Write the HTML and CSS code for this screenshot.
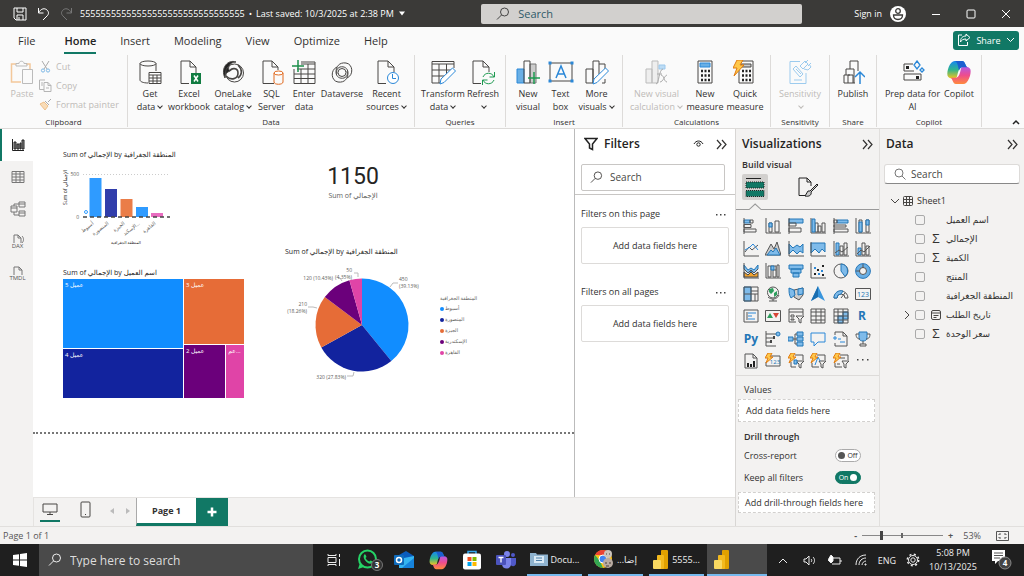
FILE: index.html
```html
<!DOCTYPE html>
<html lang="en">
<head>
<meta charset="utf-8">
<title>Power BI Desktop</title>
<link rel="stylesheet" href="styles.css">
</head>
<body>
<header class="titlebar">
  <div class="title-left">
    <button class="plain" aria-label="Save"><svg width="14" height="14" viewBox="0 0 14 14" class="line"><path d="M1 1h12v12H3l-2-2zM4 1v4h6V1M4 13V8h6v5M6 10v3"/></svg></button>
    <button class="plain" aria-label="Undo"><svg width="13" height="14" viewBox="0 0 13 14" class="line"><path d="M1.500 1v5h5M1.500 6C4 1 8 1 10 3s2 4 0 6l-4 4"/></svg></button>
    <button class="plain dim" aria-label="Redo"><svg width="13" height="14" viewBox="0 0 13 14" class="line"><path d="M11.500 1v5h-5M11.500 6C9 1 5 1 3 3s-2 4 0 6l4 4"/></svg></button>
    <button class="plain filename"><span>55555555555555555555555555555555</span><span>•</span><span>Last saved: 10/3/2025 at 2:38 PM</span><svg width="8" height="5" viewBox="0 0 8 5"><path d="M1 .5h6L4 4.500z" fill="#fff"/></svg></button>
  </div>
  <label class="title-search"><svg width="14" height="14" viewBox="0 0 14 14" class="line"><circle cx="8.500" cy="5" r="4"/><path d="M5.500 8L1 12.500"/></svg><input type="text" placeholder="Search" aria-label="Search"></label>
  <div class="title-right">
    <button class="plain signin">Sign in <svg width="16" height="16" viewBox="0 0 16 16"><circle cx="8" cy="8" r="8" fill="#fff"/><g fill="none" stroke="#3b3a38" stroke-width="1.300"><circle cx="8" cy="5" r="2.300"/><path d="M3.500 9h9c0 6-9 6-9 0z"/></g></svg></button>
    <button class="plain" aria-label="Minimize"><svg width="10" height="10" viewBox="0 0 10 10" class="line"><path d="M1 5.500h8"/></svg></button>
    <button class="plain" aria-label="Maximize"><svg width="10" height="10" viewBox="0 0 10 10" class="line"><rect x="1" y="1" width="8" height="8" rx="1"/></svg></button>
    <button class="plain" aria-label="Close"><svg width="10" height="10" viewBox="0 0 10 10" class="line"><path d="M1 1l8 8M9 1L1 9"/></svg></button>
  </div>
</header>

<nav class="tabs">
  <a href="#">File</a><a href="#" class="on">Home</a><a href="#">Insert</a><a href="#">Modeling</a><a href="#">View</a><a href="#">Optimize</a><a href="#">Help</a>
  <button class="share"><svg width="14" height="14" viewBox="0 0 14 14" class="line"><path d="M5 2H1.500v10.500h9V9M9 1l4 3.500-4 3.500V6C6 6 4.500 7 3.500 9c0-4 2-6 5.500-6z"/></svg>Share<svg width="9" height="6" viewBox="0 0 9 6" class="line"><path d="M1 1l3.500 3.500L8 1"/></svg></button>
</nav>

<section class="ribbon">
  <div class="group">
    <div class="tools clip">
      <button class="tool off"><svg width="24" height="25" viewBox="0 0 24 25" class="ic"><path d="M6 4H1.500v18H11M16 4h4v5" stroke="#f3c89b" stroke-width="1.500"/><path d="M6 6V3.500h3c0-3 5-3 5 0h3V6z" stroke="#bbb"/><path d="M12.500 9.500h10v14h-10z" stroke="#bbb"/></svg>Paste</button>
      <div class="cliplist">
        <button><svg width="13" height="13" viewBox="0 0 13 13" class="ic"><path d="M3 1l5 8M10 1L5 9" stroke="#aaa"/><circle cx="4" cy="10.500" r="1.600" stroke="#7db8e6"/><circle cx="9" cy="10.500" r="1.600" stroke="#7db8e6"/></svg>Cut</button>
        <button><svg width="13" height="13" viewBox="0 0 13 13" class="ic" ><path d="M5 10.500H.5V1H6M5 3.500h4l3 3v6H5zM9 3.500v3h3M2 4h2M2 6h2M7 9h3" stroke="#b5b5b5"/></svg>Copy</button>
        <button><svg width="13" height="13" viewBox="0 0 13 13" class="ic"><path d="M12 1L9 4M6 3l4 4M5 4l4 4" stroke="#aaa"/><path d="M5 4L1 6l5 6 3-4z" fill="#f8dcb8" stroke="#efc08a"/></svg>Format painter</button>
      </div>
    </div><span class="gname">Clipboard</span>
  </div>
  <div class="group">
    <div class="tools data">
      <button class="tool"><svg width="24" height="25" viewBox="0 0 24 25" class="ic"><ellipse cx="10" cy="3.500" rx="8" ry="2.500"/><path d="M2 3.500V20c0 1.500 3 3 8 3M18 3.500V11"/><path d="M11 12.500h12v11H11zM11 15h12M11 18h12M11 21h12M15 15v8.500M19 15v8.500" fill="#fff"/></svg>Get<br>data<span class="dd"></span></button>
      <button class="tool"><svg width="24" height="25" viewBox="0 0 24 25" class="ic"><path d="M12 23.500H4V1h9l6 6v6M13 1v6h6"/><path d="M14 13h10v11H14z" fill="#107c41" stroke="none"/><path d="M17 15.500l4 6M21 15.500l-4 6" stroke="#fff" stroke-width="1.500"/></svg>Excel<br>workbook</button>
      <button class="tool"><svg width="24" height="25" viewBox="0 0 24 25" class="ic"><path d="M4 18C-1 8 7-1 15 2c-7 0-9 7-6 9-3 1-5 3-5 7z" fill="#222"/><circle cx="13.500" cy="13" r="9"/><path d="M5 16c5 5 12 3 12-3s-7-5-8-2M17 5c5 5 4 10 0 13" stroke-width="1.600"/></svg>OneLake<br>catalog<span class="dd"></span></button>
      <button class="tool"><svg width="24" height="25" viewBox="0 0 24 25" class="ic"><path d="M14 23.500H3V1h9l6 6v3M12 1v6h6"/><g stroke="#e06a20"><ellipse cx="18.500" cy="13" rx="4.500" ry="2" fill="#fff"/><path d="M14 13v9c0 3 9 3 9 0v-9"/></g></svg>SQL<br>Server</button>
      <button class="tool"><svg width="24" height="25" viewBox="0 0 24 25" class="ic"><path d="M9 2h14v21.500H2V9M9 4h14M5 9h18M2 14h21M2 18.500h21M9 9v14.500M16 4v19.500"/><path d="M6 0v12M0 6h12" stroke="#1d8f4b" stroke-width="1.500"/></svg>Enter<br>data</button>
      <button class="tool"><svg width="24" height="25" viewBox="0 0 24 25" class="ic"><circle cx="12" cy="12.500" r="4"/><path d="M17 18c7-3 6-14-1-15C9 2 6 7 6 12s4 7 8 6c3-1 4-4 3-7M7 7C0 10 1 21 8 22c7 1 10-4 10-9s-4-7-8-6c-3 1-4 4-3 7"/></svg>Dataverse</button>
      <button class="tool"><svg width="24" height="25" viewBox="0 0 24 25" class="ic"><path d="M11 23.500H3V1h10l6 6v5M13 1v6h6"/><circle cx="18" cy="18" r="5.500" stroke="#2b88d8" fill="#fff"/><path d="M17.500 14v4.500h3.500" stroke="#2b88d8"/></svg>Recent<br>sources<span class="dd"></span></button>
    </div><span class="gname">Data</span>
  </div>
  <div class="group">
    <div class="tools queries">
      <button class="tool"><svg width="25" height="25" viewBox="0 0 25 25" class="ic"><path d="M9 23H1V1.500h22V8M1 4h22M1 10h20M1 16h13M8 4v19M15.500 4v11"/><path d="M9 24l1-5L21.500 8l3 3L13 22.500z" stroke="#2b88d8" fill="#fff"/></svg>Transform<br>data<span class="dd"></span></button>
      <button class="tool"><svg width="24" height="25" viewBox="0 0 24 25" class="ic"><path d="M10 23.500H2V1h10l6 6v5M12 1v6h6"/><path d="M12 17c2-5 9-5 11 0M23.500 12v5h-5M23 20c-2 5-9 5-11 0M11.500 25v-5h5" stroke="#1d9a50"/></svg>Refresh<br><span class="dd"></span></button>
    </div><span class="gname">Queries</span>
  </div>
  <div class="group w-insert">
    <div class="tools insert">
      <button class="tool"><svg width="24" height="25" viewBox="0 0 24 25" class="ic"><path d="M1 9h7v14H1z" fill="#69afe5" stroke="#2b88d8"/><path d="M14 4h6v19h-6z" fill="#ccc" stroke="#777"/><path d="M8 1h6v22H8z"/><path d="M18 12v12M12 18h12" stroke="#1d9a50" stroke-width="1.500"/></svg>New<br>visual</button>
      <button class="tool"><svg width="26" height="25" viewBox="0 0 26 25" class="ic"><path d="M2 3h22v18H2z"/><path d="M8 18l5-12 5 12M10 14h6" stroke="#2b88d8" stroke-width="1.500"/><path d="M.5 1.500h3v3h-3zM22.500 1.500h3v3h-3zM.5 19.500h3v3h-3zM22.500 19.500h3v3h-3z" fill="#2b88d8" stroke="none"/></svg>Text<br>box</button>
      <button class="tool"><svg width="24" height="25" viewBox="0 0 24 25" class="ic"><path d="M1 9h7v14H1zM8 23V1h6v13M14 4h6v5M17 23h3v-4"/><path d="M8 24l1-5L20.500 8l3 3L12 22.500z" stroke="#2b88d8" fill="#fff"/></svg>More<br>visuals<span class="dd"></span></button>
    </div><span class="gname">Insert</span>
  </div>
  <div class="group w-calc">
    <div class="tools calc">
      <button class="tool off"><svg width="24" height="25" viewBox="0 0 24 25" class="ic"><path d="M1 9h6v14H1zM7 1h6v22H7z" fill="#eee" stroke="#bbb"/><path d="M14 5h6v4h-6z" fill="#bcdcf5" stroke="#9cc8ec"/><path d="M11 24c3 0 3-15 7-15M12 14h5M16 15c3 0 3 7 6 7M22 15c-2 0-4 7-7 7" stroke="#aaa"/></svg>New visual<br>calculation<span class="dd"></span></button>
      <button class="tool"><svg width="24" height="25" viewBox="0 0 24 25" class="ic"><path d="M5 1h14v22H5z"/><path d="M7 3h10v4H7z" fill="#69afe5" stroke="#2b88d8"/><path d="M8 11h9M8 15.500h9M8 20h9" stroke-width="2.500" stroke-dasharray="2 1.500" stroke="#222"/></svg>New<br>measure</button>
      <button class="tool"><svg width="24" height="25" viewBox="0 0 24 25" class="ic"><path d="M6 1h14v22H6z"/><path d="M8 4h10v3H8z" fill="#ccc"/><path d="M9 11h9M9 15.500h9M9 20h9" stroke-width="2.500" stroke-dasharray="2 1.500" stroke="#222"/><path d="M4 0h6L7 5h4L1 16l3-8H0z" fill="#ffc84a" stroke="#e07b10"/></svg>Quick<br>measure</button>
    </div><span class="gname">Calculations</span>
  </div>
  <div class="group w-sens">
    <div class="tools one">
      <button class="tool off"><svg width="24" height="25" viewBox="0 0 24 25" class="ic"><g stroke="#9ccbee"><path d="M12 1.500H2v22h16V13M5 9l3-3 7 8-3 3zM8 9l5 5M6 20h8M12 6l5-5 3 3-5 5zM17 3l3-3M20 6l3-3M16 9l4 1 3-3-2-3"/></g></svg>Sensitivity<br><span class="dd"></span></button>
    </div><span class="gname">Sensitivity</span>
  </div>
  <div class="group w-share">
    <div class="tools one">
      <button class="tool"><svg width="24" height="25" viewBox="0 0 24 25" class="ic"><path d="M14 23H3v-8h6M7 23v-8h5v8M5 15V9h8M9 9V1h8v10M13 9v14"/><path d="M19 24V12M14 17l5-5 5 5" stroke="#2b88d8" stroke-width="1.500"/></svg>Publish</button>
    </div><span class="gname">Share</span>
  </div>
  <div class="group w-copilot">
    <div class="tools copilot">
      <button class="tool"><svg width="24" height="25" viewBox="0 0 24 25" class="ic"><path d="M12 4H3v7h10M3 14h17v6H3z"/><path d="M5 6h3v3H5zM15 16h3v3h-3z" fill="#222" stroke="none"/><path d="M16 1l3 4-3 4-3-4zM21 8l2 2-2 2-2-2z" stroke="#2b88d8" stroke-width="1.300"/></svg>Prep data for<br>AI</button>
      <button class="tool"><svg width="26" height="25" viewBox="0 0 24 24"><use href="#copilot"/></svg>Copilot</button>
    </div><span class="gname">Copilot</span>
  </div>
  <button class="plain collapse" aria-label="Collapse ribbon"><svg width="8" height="6" viewBox="0 0 8 6" fill="none" stroke="#222" stroke-width="1.500"><path d="M1 5l3-3 3 3"/></svg></button>
</section>

<main class="work">
  <nav class="rail">
    <a href="#" class="on" aria-label="Report view"><svg width="14" height="14" viewBox="0 0 14 14" class="ic"><path d="M1.500 1v11.500H13" stroke="#222"/><path d="M3 4h2v7H3zM6 6h2v5H6zM9 5h1v6H9zM11 2h2v9h-2z" fill="#888" stroke="#222"/></svg></a>
    <a href="#" aria-label="Table view"><svg width="14" height="14" viewBox="0 0 14 14" class="ic gray"><path d="M1 1.500h12v11H1zM1 4h12M1 7h12M1 10h12M5 1.500v11M9 1.500v11"/></svg></a>
    <a href="#" aria-label="Model view"><svg width="16" height="16" viewBox="0 0 16 16" class="ic gray"><path d="M1 5h6v6H1zM9 1h6v5H9zM9 10h6v5H9zM1 7h6M9 3h6M9 12h6M4 5V3h5M4 11v3h5"/></svg></a>
    <a href="#" aria-label="DAX query view"><svg width="14" height="10" viewBox="0 0 14 10" class="ic gray"><path d="M3 9V1h4l3 3v5M7 1v3h3M11 2c2 2 2 5 0 7"/></svg><span>DAX</span></a>
    <a href="#" aria-label="TMDL view"><svg width="14" height="10" viewBox="0 0 14 10" class="ic gray"><path d="M3 9V1h5l3 3v5M8 1v3h3"/></svg><span>TMDL</span></a>
  </nav>

  <div class="center">
    <div class="center-top">
      <div class="canvas">
        <div class="visuals">
          <div class="col">
            <h3>Sum of الإجمالي by المنطقة الجغرافية</h3>
            <svg class="bars" width="110" height="84" viewBox="0 0 110 84">
              <path d="M20 8.500h87" stroke="#ccc" stroke-dasharray="1 2"/>
              <text x="16" y="10" text-anchor="end">500</text><text x="16" y="53" text-anchor="end">0</text>
              <text class="dark" transform="translate(4 39) rotate(-90)">Sum of الإجمالي</text>
              <path d="M26.500 12h12v39h-12z" fill="#2f9bff"/><path d="M42 23h12v28H42z" fill="#303dab"/><path d="M57.500 33h12v18h-12z" fill="#ea7d48"/><path d="M73 41h12v10H73z" fill="#2f9bff"/><path d="M88 47h12v4H88z" fill="#e96cc0"/>
              <path d="M20 51h87" stroke="#444" stroke-width="1.500" stroke-dasharray="4 3"/>
              <circle cx="23" cy="46" r="1.500" fill="none" stroke="#2f9bff"/>
              <g text-anchor="end"><text transform="translate(31 58) rotate(-38)">أسيوط</text><text transform="translate(46 58) rotate(-38)">المنصورة</text><text transform="translate(62 58) rotate(-38)">الجيزة</text><text transform="translate(77 58) rotate(-38)">الإسكند...</text><text transform="translate(93 58) rotate(-38)">القاهرة</text></g>
              <text class="dark small" x="63" y="78" text-anchor="middle">المنطقة الجغرافية</text>
            </svg>
            <h3 class="second">Sum of الإجمالي by اسم العميل</h3>
            <div class="treemap">
              <div class="tm-left"><span class="blue">عميل 5</span><span class="navy">عميل 4</span></div>
              <div class="tm-right"><span class="orange">عميل 3</span><div class="tm-pair"><span class="purple">عميل 2</span><span class="pink">عم...</span></div></div>
            </div>
          </div>
          <div class="col">
            <div class="card"><strong>1150</strong><span>Sum of الإجمالي</span></div>
            <h3>Sum of الإجمالي by المنطقة الجغرافية</h3>
            <div class="pierow">
              <svg width="155" height="128" viewBox="0 0 155 128">
                <g transform="translate(77 67)">
                  <path d="M0 0V-46.500A46.500 46.500 0 0 1 29.300 36.100z" fill="#118dff"/>
                  <path d="M0 0L29.300 36.100A46.500 46.500 0 0 1-40.700 22.500z" fill="#12239e"/>
                  <path d="M0 0L-40.700 22.500A46.500 46.500 0 0 1-37.200-27.900z" fill="#e66c37"/>
                  <path d="M0 0L-37.200-27.900A46.500 46.500 0 0 1-12.600-44.800z" fill="#6b007b"/>
                  <path d="M0 0L-12.600-44.800A46.500 46.500 0 0 1 0-46.500z" fill="#e044a7"/>
                </g>
                <path d="M105 29l3-4h5M73 19v-4h-4M32 50l-4-1h-5M69 114l-1 4h-6M57 23l-2-3h-2" fill="none" stroke="#bbb"/>
                <text x="114" y="23">450</text><text x="114" y="30">(39.13%)</text>
                <text x="67" y="14" text-anchor="end">50</text><text x="67" y="21" text-anchor="end">(4.35%)</text>
                <text x="48" y="22" text-anchor="end">120 (10.43%)</text>
                <text x="22" y="48" text-anchor="end">210</text><text x="22" y="55" text-anchor="end">(18.26%)</text>
                <text x="61" y="121" text-anchor="end">320 (27.83%)</text>
              </svg>
              <div class="legend"><b>المنطقة الجغرافية</b><ul><li class="c1">أسيوط</li><li class="c2">المنصورة</li><li class="c3">الجيزة</li><li class="c4">الإسكندرية</li><li class="c5">القاهرة</li></ul></div>
            </div>
          </div>
        </div>
      </div>

      <aside class="filters">
        <div class="filters-head">
          <div class="pane-title"><svg width="14" height="14" viewBox="0 0 14 14" fill="none" stroke="#222" stroke-width="1.500"><path d="M1 1.500h12L8.500 7v5.500l-3-1.500V7z"/></svg><h2>Filters</h2>
            <button class="plain" aria-label="Hide filters"><svg width="11" height="8" viewBox="0 0 11 8" fill="none" stroke="#222"><path d="M1 4c2-4 7-4 9 0"/><circle cx="5.500" cy="4.500" r="1.700"/></svg></button>
            <button class="plain" aria-label="Collapse filters"><svg width="11" height="11" viewBox="0 0 11 11" class="chev"><path d="M1 1l4 4.500L1 10M6 1l4 4.500L6 10"/></svg></button></div>
          <label class="fsearch"><svg width="13" height="13" viewBox="0 0 14 14" class="ic"><circle cx="8.500" cy="5" r="4"/><path d="M5.500 8L1 12.500"/></svg><input type="text" placeholder="Search" aria-label="Search filters"></label>
        </div>
        <div class="fsec"><span>Filters on this page</span><button class="plain" aria-label="More"><svg width="10" height="4" viewBox="0 0 10 4" fill="#444"><path d="M0 2h1.500v1.500H0zM4 2h1.500v1.500H4zM8 2h1.500v1.500H8z"/></svg></button></div>
        <div class="drop">Add data fields here</div>
        <div class="fsec"><span>Filters on all pages</span><button class="plain" aria-label="More"><svg width="10" height="4" viewBox="0 0 10 4" fill="#444"><path d="M0 2h1.500v1.500H0zM4 2h1.500v1.500H4zM8 2h1.500v1.500H8z"/></svg></button></div>
        <div class="drop">Add data fields here</div>
      </aside>
    </div>
    <div class="pagebar">
      <button class="view on" aria-label="Desktop layout"><svg width="16" height="13" viewBox="0 0 16 13" class="ic"><path d="M1 1h14v8H1zM8 9v2M5 11.500h6"/></svg></button>
      <button class="view" aria-label="Mobile layout"><svg width="11" height="17" viewBox="0 0 11 17" class="ic"><rect x="1" y="1" width="9" height="15" rx="1"/><path d="M5 13.500h1"/></svg></button>
      <button class="view arrow" aria-label="Previous page"><svg width="4" height="6" viewBox="0 0 4 6"><path d="M4 0v6L0 3z" fill="#bbb"/></svg></button>
      <button class="view arrow" aria-label="Next page"><svg width="4" height="6" viewBox="0 0 4 6"><path d="M0 0v6l4-3z" fill="#bbb"/></svg></button>
      <button class="page">Page 1</button><button class="add" aria-label="New page"><svg width="10" height="10" viewBox="0 0 10 10" stroke="#fff" stroke-width="2.500"><path d="M5 .5v9M.5 5h9"/></svg></button>
    </div>
  </div>

  <aside class="viz">
    <div class="pane-title"><h2>Visualizations</h2><button class="plain" aria-label="Collapse"><svg width="11" height="11" viewBox="0 0 11 11" class="chev"><path d="M1 1l4 4.500L1 10M6 1l4 4.500L6 10"/></svg></button></div>
    <h4>Build visual</h4>
    <div class="modes">
      <button class="mode on" aria-label="Build visual"><svg width="20" height="20" viewBox="0 0 20 20"><path d="M1 1.500h15" stroke="#222"/><path d="M1 5h18v6H1zM1 13.500h18v6H1z" fill="#117865" stroke="#222" stroke-dasharray="1 1"/></svg></button>
      <button class="mode" aria-label="Format visual"><svg width="20" height="20" viewBox="0 0 20 20" fill="none" stroke="#222"><path d="M8 18.500H1V1h8l4 4v4M9 1v4h4"/><path d="M19 7l-7 7-2 0-3 5c4 1 7-1 6-4l7-7z" fill="#ccc"/></svg></button>
    </div>
    <svg class="notch" width="142" height="7" viewBox="0 0 142 7" preserveAspectRatio="xMinYMin slice"><path d="M0 6.500h13L19 1l6 5.500h400" fill="none" stroke="#999"/></svg>
    <div class="gallery">
      <svg viewBox="0 0 16 16"><path class="b" d="M1 2h6v3H1z"/><path class="k" d="M7 2h3v3H7zM1 6.500h7v3H1zM1 11h12v3H1zM1 0v16"/></svg>
      <svg viewBox="0 0 16 16"><path class="k" d="M1 0v15h15M4 5h3v9H4zM10 3h4v11h-4z"/><path class="b" d="M4 5h3v4H4z"/></svg>
      <svg viewBox="0 0 16 16"><path class="b" d="M1 1h14v4H1z"/><path class="k" d="M1 5h7v3H1zM1 10h12v4H1zM1 0v16"/></svg>
      <svg viewBox="0 0 16 16"><path class="k" d="M1 0v15h15M5 5h3v9H5zM8 8h3v6H8zM12 5h3v9h-3z"/><path class="b" d="M2 1h3v13H2z"/></svg>
      <svg viewBox="0 0 16 16"><path class="b" d="M4 2h11v3H4z"/><path class="k" d="M1 2h3v3H1zM1 7h12v2H1zM1 11h14v3H1zM1 0v16"/></svg>
      <svg viewBox="0 0 16 16"><path class="k" d="M1 0v15h15M4 2h3v12H4zM11 2h3v12h-3z"/><path class="b" d="M4 4h3v10H4zM11 2h3v5h-3z"/></svg>

      <svg viewBox="0 0 16 16"><path class="k" d="M1 0v15h15M2 11l4-5 3 3 6-5"/><path class="l" d="M2 9l5-3 3-3 5 6"/></svg>
      <svg viewBox="0 0 16 16"><path class="k gf" d="M0 14L6 3l3 5 3-7 4 13z"/><path class="b" d="M2 14l4-5 2 2 3-4 4 7z"/></svg>
      <svg viewBox="0 0 16 16"><path class="b" d="M1 3l4 4 4-3 3 2 3-3v9l-3-2-3 3-4-4-4 4z"/><path class="k" d="M1 0v15h15"/></svg>
      <svg viewBox="0 0 16 16"><path class="b" d="M1 2h14v9l-3-3-3 4-4-4-4 4z"/><path class="k" d="M1 1v14h15"/></svg>
      <svg viewBox="0 0 16 16"><path class="b" d="M3 2h3v12H3z"/><path class="k" d="M1 0v15h15M7 5h3v9H7zM11 2h3v12h-3zM2 12l4-3 3 2 6-5"/></svg>
      <svg viewBox="0 0 16 16"><path class="b" d="M3 7h3v7H3z"/><path class="k" d="M1 0v15h15M7 2h3v12H7zM11 5h3v9h-3zM2 13l4-4 3 2 6-6"/></svg>

      <svg viewBox="0 0 16 16"><path class="b" d="M1 2l4 5 3-2 3 2 4-5v4l-4 4-3-2-3 2-4-4z"/><path d="M1 9l4 3 3-3 3 3 4-3v5H1z" fill="#f0a22e" stroke="#444"/><path class="k" d="M1 0v15h15M1 6l4 4 3-3 3 3 4-4"/></svg>
      <svg viewBox="0 0 16 16"><path class="k" d="M1 0v15h15M3 3h3v11H3zM8 7h3v7H8zM12 2h2v12h-2zM6 3h5v4"/><path class="b" d="M6 3h3v4H6z"/></svg>
      <svg viewBox="0 0 16 16"><path class="b" d="M1 2h14v4H1zM3 6h10v4H3zM5 10h6v4H5z"/></svg>
      <svg viewBox="0 0 16 16"><path class="k" d="M1 0v15h15"/><path fill="#222" d="M4 10h2v2H4zM7 6h2v2H7zM12 2h2v2h-2zM12 11h2v2h-2z"/><path fill="#2b88d8" d="M4 4h2v2H4zM8 10h2v2H8zM11 7h2v2h-2z"/></svg>
      <svg viewBox="0 0 16 16"><circle class="k" cx="8" cy="8" r="7"/><path class="b" d="M8 8V1a7 7 0 0 1 4 12.500z"/></svg>
      <svg viewBox="0 0 16 16"><circle cx="8" cy="8" r="5.500" fill="none" stroke="#69afe5" stroke-width="4"/><path class="k" d="M8 1v4M1 8h4"/><circle class="k" cx="8" cy="8" r="3.500"/><circle cx="8" cy="8" r="7.400" fill="none" stroke="#2b78b8"/></svg>

      <svg viewBox="0 0 16 16"><path class="b" d="M1 1h7v14H1z"/><path class="k" d="M1 1h14v14H1zM8 1v14M1 8h14M8 5h7M12 8v7"/></svg>
      <svg viewBox="0 0 16 16"><circle class="k" cx="8" cy="6.500" r="5.500"/><path d="M4 3l4-1 1 3-3 3-2-2zM9 7l3-2v4l-3 2z" fill="#2d9d5c"/><path class="k" d="M3 11c3 3 9 3 11-2M8 13v2M4 15h8"/></svg>
      <svg viewBox="0 0 16 16"><path class="k gf" d="M6 4l9-2v7l-4 5-5-3z"/><path class="b" d="M1 2l5 2 1 5-4 3C1 9 1 6 1 2zM10 3l5-1v6l-5 1z"/></svg>
      <svg viewBox="0 0 16 16"><path d="M8 0l7 15-7-4-7 4z" fill="#3a96dd"/><path d="M8 0v11l-7 4z" fill="#1b6eaf"/></svg>
      <svg viewBox="0 0 16 16"><path class="k" d="M1 12a7 7 0 0 1 14 0h-3a4 4 0 0 0-8 0zM8 12l4-5"/><path class="b" d="M1 12a7 7 0 0 1 9-7L8 8a4 4 0 0 0-4 4z"/></svg>
      <svg viewBox="0 0 16 16"><path class="k" d="M.5 2.500h15v11H.5z"/><text x="8" y="11" text-anchor="middle" class="t7">123</text></svg>

      <svg viewBox="0 0 16 16"><path class="k" d="M1 2h14v12H1zM4 4v8"/><path class="l" d="M5 5h8M5 8h4M5 11h7"/></svg>
      <svg viewBox="0 0 16 16"><path class="k" d="M.5 2.500h15v11H.5z"/><path d="M2 10l3-5 3 5z" fill="#2d9d5c"/><path d="M8 5h6l-3 5z" fill="#d64535"/></svg>
      <svg viewBox="0 0 16 16"><path class="k" d="M8 14H1V1h14v6M1 4h14M3 7h3v2H3zM3 11h3v1H3zM8 8h8l-3 3v4l-2-1v-3z"/></svg>
      <svg viewBox="0 0 16 16"><path class="k" d="M1 1h14v14H1zM1 4h14M1 8h14M1 12h14M6 1v14M11 1v14"/></svg>
      <svg viewBox="0 0 16 16"><path class="b" d="M5 8h5v7H5zM10 4h5v7h-5z"/><path class="k" d="M1 1h14v14H1zM1 4h14M1 8h14M1 12h14M5 1v14M10 1v14"/></svg>
      <svg viewBox="0 0 16 16"><text x="7" y="12" text-anchor="middle" class="t12">R</text></svg>

      <svg viewBox="0 0 16 16"><text x="8" y="12" text-anchor="middle" class="t12">Py</text></svg>
      <svg viewBox="0 0 16 16"><path class="k" d="M1 0v15h10M1 3h11M1 7h8M1 11h5"/><circle class="b" cx="13" cy="3" r="2"/><path fill="#444" d="M8 5h2v3H8zM5 9h2v3H5z"/></svg>
      <svg viewBox="0 0 16 16"><path class="b" d="M0 6h5v4H0zM9 1h6v4H9zM9 6h6v4H9zM9 11h6v4H9z"/><path class="k" d="M5 8h4M7 3v10M7 3h2M7 13h2"/></svg>
      <svg viewBox="0 0 16 16"><path class="l" d="M1 2h14v9H8l-4 4v-4H1z"/></svg>
      <svg viewBox="0 0 16 16"><path class="k" d="M2 4V1h8l4 4v10H2v-3M10 1v4h4"/><path class="l" d="M5 8h3M7 11h5M1 6h2v2H1z"/></svg>
      <svg viewBox="0 0 16 16"><path class="b" d="M4 1h8v6c0 4-8 4-8 0z"/><path class="k" d="M4 3H1c0 4 2 5 4 5M12 3h3c0 4-2 5-4 5M8 10v3M5 15v-2h6v2z"/></svg>

      <svg viewBox="0 0 16 16"><path class="k" d="M2 1h8l4 4v10H2zM10 1v4h4"/><path fill="#222" d="M4 10h2v4H4zM7 11h2v3H7zM10 8h2v6h-2z"/></svg>
      <svg viewBox="0 0 16 16"><path class="k" d="M3 3h12v10H1V9"/><text x="10" y="11" text-anchor="middle" class="t6">123</text><path class="z" d="M3 0h4L5 4h3L1 10l2-5H0z"/></svg>
      <svg viewBox="0 0 16 16"><path class="k" d="M7 2h8v5M3 9v5h5M8 8h8l-3 3v4l-2-1v-3z"/><path class="b" d="M6 7h3v4H6z"/><path class="z" d="M3 0h4L5 4h3L1 10l2-5H0z"/></svg>
      <svg viewBox="0 0 16 16"><path class="k" d="M7 2h8v5M2 10v4h7M9 8h7l-3 3v4l-2-1v-3z"/><path class="l" d="M5 12l3-8 2 4"/><path class="z" d="M3 0h4L5 4h3L1 10l2-5H0z"/></svg>
      <svg viewBox="0 0 16 16"><path class="k" d="M7 2h8v5M2 10v4h7M7 5h5M4 11h3M9 8h7l-3 3v4l-2-1v-3z"/><path class="z" d="M3 0h4L5 4h3L1 10l2-5H0z"/></svg>
      <svg viewBox="0 0 16 16"><path fill="#444" d="M2 6h1.500v1.500H2zM7 6h1.500v1.500H7zM12 6h1.500v1.500H12z"/></svg>
    </div>
    <div class="wells">
      <span>Values</span>
      <div class="well">Add data fields here</div>
      <h5>Drill through</h5>
      <div class="opt"><span>Cross-report</span><label class="toggle"><input type="checkbox" aria-label="Cross-report">Off</label></div>
      <div class="opt"><span>Keep all filters</span><label class="toggle checked">On<input type="checkbox" checked aria-label="Keep all filters"></label></div>
      <div class="well last">Add drill-through fields here</div>
    </div>
  </aside>

  <aside class="datapane">
    <div class="pane-title"><h2>Data</h2><button class="plain" aria-label="Collapse"><svg width="11" height="11" viewBox="0 0 11 11" class="chev"><path d="M1 1l4 4.500L1 10M6 1l4 4.500L6 10"/></svg></button></div>
    <label class="dsearch"><svg width="12" height="12" viewBox="0 0 12 12" class="ic gray"><circle cx="5" cy="5" r="4"/><path d="M8 8l3.500 3.500"/></svg><input type="text" placeholder="Search" aria-label="Search data"></label>
    <div class="sheet"><svg width="10" height="6" viewBox="0 0 10 6" class="ic"><path d="M1 1l4 4 4-4"/></svg><svg width="10" height="10" viewBox="0 0 10 10" class="ic"><rect x=".5" y=".5" width="9" height="9" rx="1"/><path d="M.5 3.500h9M.5 6.500h9M3.500.5v9M6.500.5v9"/></svg>Sheet1</div>
    <ul class="fields">
      <li><i></i><label><input type="checkbox"><i></i><span>اسم العميل</span></label></li>
      <li><i></i><label><input type="checkbox"><i>Σ</i><span>الإجمالي</span></label></li>
      <li><i></i><label><input type="checkbox"><i>Σ</i><span>الكمية</span></label></li>
      <li><i></i><label><input type="checkbox"><i></i><span>المنتج</span></label></li>
      <li><i></i><label><input type="checkbox"><i></i><span>المنطقة الجغرافية</span></label></li>
      <li><i><svg width="6" height="10" viewBox="0 0 6 10" class="ic"><path d="M1 1l4 4-4 4"/></svg></i><label><input type="checkbox"><i><svg width="10" height="10" viewBox="0 0 10 10" class="ic"><rect x=".5" y=".5" width="9" height="9" rx="1.500"/><path d="M.5 3h9M2.500 5.500h5M2.500 7.500h3"/></svg></i><span>تاريخ الطلب</span></label></li>
      <li><i></i><label><input type="checkbox"><i>Σ</i><span>سعر الوحدة</span></label></li>
    </ul>
  </aside>
</main>

<footer class="status"><span>Page 1 of 1</span>
  <div class="zoom"><b>-</b><input type="range" min="0" max="100" value="23" aria-label="Zoom"><b>+</b><span>53%</span><svg width="13" height="10" viewBox="0 0 13 10" fill="none" stroke="#555"><path d="M.5.5h12v9H.5zM3 4V3h2M8 3h2v1M10 6v1H8M5 7H3V6"/></svg></div>
</footer>

<footer class="taskbar">
  <button class="start" aria-label="Start"><svg width="14" height="14" viewBox="0 0 14 14" fill="#fff"><path d="M0 2l6-.8v5.300H0zM7 1l7-1v6.500H7zM0 7.500h6v5.300L0 12zM7 7.500h7V14l-7-1z"/></svg></button>
  <label class="tsearch"><svg width="14" height="14" viewBox="0 0 14 14" class="line"><circle cx="8.500" cy="5" r="4"/><path d="M5.500 8L1 12.500"/></svg><input type="text" placeholder="Type here to search" aria-label="Type here to search"></label>
  <div class="pins">
    <button aria-label="Task view"><svg width="14" height="14" viewBox="0 0 14 14" class="line"><path d="M1 1v1.500h8V1M1 4.500h8v5H1zM1 13v-1.500h8V13M12.500 1v3M12.500 6v7"/></svg></button>
    <button aria-label="WhatsApp"><svg width="26" height="22" viewBox="0 0 26 22"><circle cx="10.500" cy="10" r="8.500" fill="none" stroke="#25d366" stroke-width="2"/><path d="M1 20l2-6 4 4z" fill="#25d366"/><path d="M7 6c1-2 2 0 2.500 2L8.500 9c1 2 2 3 4 3.500l1-1c2 .5 3 1 1.500 2.500C12 17 5 10 7 6z" fill="#25d366"/><circle cx="20" cy="16" r="5.500" fill="#333" stroke="#777"/><text x="20" y="19" text-anchor="middle" class="badge">3</text></svg></button>
    <button aria-label="Outlook"><svg width="20" height="18" viewBox="0 0 20 18"><path d="M5 4l7-4 8 5v12H5z" fill="#0a5cbd"/><path d="M5 8l15-3v12H5z" fill="#35b5f1"/><path d="M20 7v10H8z" fill="#1683dc"/><rect y="4" width="10" height="10" rx="1" fill="#0f6cbd"/><circle cx="5" cy="9" r="2.500" fill="none" stroke="#fff" stroke-width="1.500"/></svg></button>
    <button aria-label="Copilot"><svg width="19" height="19" viewBox="0 0 24 24"><defs><linearGradient id="ga" x1="0" y1="0" x2="0" y2="1"><stop offset="0" stop-color="#1688f0"/><stop offset=".5" stop-color="#2fb58c"/><stop offset="1" stop-color="#f5c51b"/></linearGradient><linearGradient id="gb" x1="0" y1="0" x2="0" y2="1"><stop offset="0" stop-color="#b05be8"/><stop offset=".5" stop-color="#ee4c8e"/><stop offset="1" stop-color="#ff8a3c"/></linearGradient></defs>
      <g id="copilot"><path d="M8 1h7c3 0 3 5 5 6h-5c-2 0-3 2-4 5l-1 4c-1 3-8 2-9-1-1-4 2-14 7-14z" fill="url(#ga)"/><path d="M16 23H9c-3 0-3-5-5-6h5c2 0 3-2 4-5l1-4c1-3 8-2 9 1 1 4-2 14-7 14z" fill="url(#gb)"/><path d="M8 1h7c3 0 3 5 5 6h-5c-1 0-2 1-3 3-1-3-1-8-4-9z" fill="#1b5fd0"/></g></svg></button>
    <button aria-label="Store"><svg width="20" height="20" viewBox="0 0 20 20"><path d="M6 5V1.500h8V5" fill="none" stroke="#35a8ee" stroke-width="1.500"/><rect x="1" y="3.500" width="18" height="16" rx="2" fill="#fff"/><path d="M5.500 7h4v4h-4z" fill="#f25022"/><path d="M10.500 7h4v4h-4z" fill="#7fba00"/><path d="M5.500 12h4v4h-4z" fill="#00a4ef"/><path d="M10.500 12h4v4h-4z" fill="#ffb900"/></svg></button>
    <button aria-label="Teams"><svg width="20" height="18" viewBox="0 0 20 18"><circle cx="11" cy="3" r="3" fill="#7b83eb"/><circle cx="17" cy="4" r="2" fill="#5059c9"/><path d="M13 7h7v5c0 4-5 4-6 1z" fill="#5059c9"/><path d="M6 7h9v6c0 6-9 6-9 0z" fill="#7b83eb"/><rect y="4" width="10" height="10" rx="1" fill="#4b53bc"/><path d="M2.500 6.500h5M5 6.500v5" stroke="#fff" stroke-width="1.300"/></svg></button>
  </div>
  <div class="apps">
    <button><svg width="18" height="14" viewBox="0 0 18 14"><path d="M0 1h6l1 1.500h11V14H0z" fill="#8fb3cf"/><path d="M4 4h10v7H4z" fill="#d9e9f4"/><path d="M6 6h6M6 8.500h6" stroke="#4d7ea8"/></svg>Docu...</button>
    <button><svg width="20" height="20" viewBox="0 0 20 20"><circle cx="9" cy="10" r="9" fill="#fbc116"/><path d="M1 6a9 9 0 0 1 16 0H9z" fill="#ea4335"/><path d="M1 6l5 6 3 7A9 9 0 0 1 1 6z" fill="#34a853"/><circle cx="9" cy="10" r="4" fill="#4285f4" stroke="#fff"/><circle cx="14" cy="14" r="5" fill="#b8aba2"/><circle cx="14" cy="5" r="4" fill="#ccc4bc"/><path d="M11 14h2M15 14h2M12 17h3M12 5h1M15 5h1" stroke="#4a4038"/></svg><span dir="ltr">...إضا</span></button>
    <button><svg width="16" height="19" viewBox="0 0 16 19"><use href="#pbi"/></svg>5555...</button>
    <button class="active" aria-label="Power BI"><svg width="16" height="19" viewBox="0 0 16 19"><g id="pbi"><rect x="8" width="7" height="19" rx="1" fill="#e0a100"/><rect x="4" y="5" width="7" height="14" rx="1" fill="#f2b91d"/><rect y="10" width="8" height="9" rx="1" fill="#f8d861"/></g></svg></button>
  </div>
  <div class="tray">
    <button aria-label="Hidden icons"><svg width="10" height="7" viewBox="0 0 10 7" class="line"><path d="M1 6l4-4 4 4"/></svg></button>
    <button aria-label="Volume"><svg width="13" height="11" viewBox="0 0 13 11" class="line"><path d="M1 4h2l3-3v9L3 7H1zM8 4c1 1 1 2 0 3M10 2c2 2 2 5 0 7" /></svg></button>
    <button aria-label="Battery"><svg width="14" height="12" viewBox="0 0 14 12" class="line"><path d="M4 4h8v6H4M13 6v2"/><path d="M0 6l3-5 2 2v4L3 9z" fill="#fff"/></svg></button>
    <button aria-label="Network"><svg width="12" height="12" viewBox="0 0 12 12" class="line"><path d="M1 11C1 5 5 1 11 1M4 11c0-4 3-7 7-7M7 11c0-2 2-4 4-4"/><path d="M10 10h1v1h-1z"/></svg></button>
    <button>ENG</button>
    <button aria-label="Settings"><svg width="14" height="14" viewBox="0 0 14 14" class="line"><circle cx="7" cy="7" r="2.200"/><circle cx="7" cy="7" r="4.500"/><circle cx="7" cy="7" r="5.700" stroke-dasharray="2 2.500" stroke-width="1.500"/></svg></button>
    <button class="clock">5:08 PM<br>10/13/2025</button>
    <button aria-label="Notifications"><svg width="22" height="22" viewBox="0 0 22 22"><path d="M1 1h13v11H7l-3 3v-3H1z" fill="#fff"/><path d="M3 4h9M3 6.500h9M3 9h6" stroke="#555"/><circle cx="14" cy="14" r="6" fill="#444" stroke="#888"/><text x="14" y="17" text-anchor="middle" class="badge">4</text></svg></button>
  </div>
</footer>
</body>
</html>
```
FILE: styles.css
```css
* { box-sizing: border-box; }
body { margin: 0; height: 100vh; display: flex; flex-direction: column; overflow: hidden; background: #f3f2f1; color: #323130; font: 9px/13px "Open Sans", "Noto Sans", "DejaVu Sans", sans-serif; }
button, input { font: inherit; color: inherit; }
button { border: 0; padding: 0; background: none; }
input { min-width: 0; }
svg { flex: none; display: block; }
h2, h3, h4, h5, ul { margin: 0; padding: 0; }
ul { list-style: none; }
a { color: inherit; text-decoration: none; }
input[type="text"] { border: 0; background: none; outline: 0; flex: 1; padding: 0; }
.line { fill: none; stroke: currentColor; }
.ic { fill: none; stroke: #484644; }
.gray { stroke: #777; }
.chev { fill: none; stroke: #323130; stroke-width: 1.2; }
.plain { display: flex; align-items: center; }

.titlebar { flex: none; height: 27px; display: grid; grid-template-columns: 47% 1fr 222px; align-items: center; background: #3b3a38; color: #fff; }
.title-left { display: flex; align-items: center; gap: 10px; padding-left: 13px; white-space: nowrap; }
.dim { color: #777; }
.filename { gap: 4px; margin-left: -3px; }
.title-search { height: 20px; display: flex; align-items: center; gap: 8px; padding-left: 15px; border-radius: 2px; background: #d2d0ce; color: #444; }
.title-search input { font-size: 11px; }
.title-search input::placeholder { color: #2f5a68; opacity: 1; }
.title-right { display: flex; align-items: center; justify-content: flex-end; gap: 25px; padding-right: 13px; }
.signin { gap: 8px; }

.tabs { flex: none; height: 28px; display: flex; align-items: center; gap: 24px; padding: 0 5px 0 18px; background: #fafafa; font-size: 11px; }
.tabs a { height: 22px; line-height: 18px; margin-bottom: -3px; }
.tabs a:first-child { margin-right: 5px; }
.tabs .on { font-weight: 600; color: #222; border-bottom: 2px solid #117865; }
.share { margin-left: auto; margin-bottom: 2px; height: 19px; width: 66px; display: flex; align-items: center; justify-content: center; gap: 5px; border-radius: 3px; background: #117865; color: #fff; font-size: 9px; }

.ribbon { flex: none; height: 74px; display: flex; background: #fafafa; border-bottom: 1px solid #dcdad8; position: relative; }
.group { display: flex; flex-direction: column; justify-content: space-between; padding: 5px 5px 0; margin-bottom: 1px; border-right: 1px solid #dddbd9; }
.group:first-child { width: 128px; }
.group .gname { text-align: center; font-size: 8px; line-height: 10px; }
.w-insert { width: 117px; }
.w-calc { width: 148px; }
.w-sens { width: 59px; }
.w-share { width: 47px; }
.w-copilot { width: 105px; }
.tools { display: grid; justify-content: center; }
.clip { grid-template-columns: 34px 1fr; }
.data { grid-template-columns: 34px 44px 44px 33px 32px 44px 45px; }
.queries { grid-template-columns: 46px 34px; }
.insert { grid-template-columns: 34px 31px 41px; }
.calc { grid-template-columns: 56px 41px 39px; }
.one { grid-template-columns: auto; }
.copilot { grid-template-columns: 60px 33px; }
.tool { display: flow-root; text-align: center; align-self: start; white-space: nowrap; }
.tool svg { margin: 0 auto 2px; }
.dd { display: inline-block; width: 4px; height: 4px; margin: 0 1px 2px 3px; border: solid currentColor; border-width: 0 1px 1px 0; transform: rotate(45deg); }
.off { color: #bebbb8; }
.cliplist { display: flex; flex-direction: column; gap: 6px; }
.cliplist button { display: flex; align-items: center; gap: 4px; color: #bebbb8; white-space: nowrap; }
.collapse { position: absolute; right: 4px; bottom: 3px; }

.work { flex: 1; min-height: 0; display: flex; }
.rail { flex: none; width: 33px; display: flex; flex-direction: column; }
.rail a { height: 32px; display: flex; flex-direction: column; align-items: center; justify-content: center; border-left: 2px solid transparent; font-size: 6px; line-height: 5px; color: #555; }
.rail .on { background: #fff; border-color: #117865; }
.center { flex: 1; min-width: 0; display: flex; flex-direction: column; }
.center-top { flex: 1; min-height: 0; display: flex; background: #fff; }
.canvas { flex: 1; min-width: 0; }
.visuals { height: 305px; display: flex; gap: 41px; padding: 20px 0 0 30px; border-bottom: 2px dotted #777; }
.visuals h3 { font-size: 7px; font-weight: 400; line-height: 12px; white-space: nowrap; color: #252423; }
.col { width: 181px; }
.col svg text { font-size: 5px; fill: #605e5c; }
.col svg .dark { fill: #252423; }
.col svg .small { font-size: 4px; }
.bars { margin-top: 5px; overflow: visible; }
.visuals .second { margin-top: 17px; }
.treemap { display: grid; grid-template-columns: 2fr 1fr; gap: 1px; height: 119px; color: #fff; font-size: 6px; line-height: 10px; }
.treemap span { padding: 1px 2px; overflow: hidden; white-space: nowrap; }
.tm-left { display: grid; grid-template-rows: 7fr 5fr; gap: 1px; }
.tm-right { display: grid; grid-template-rows: 11fr 9fr; gap: 1px; }
.tm-pair { display: grid; grid-template-columns: 7fr 3fr; gap: 1px; }
.blue { background: #118dff; }
.navy { background: #12239e; }
.orange { background: #e66c37; }
.purple { background: #6b007b; }
.pink { background: #e044a7; }
.card { height: 97px; width: 136px; padding-top: 16px; display: flex; flex-direction: column; align-items: center; font-size: 7px; color: #605e5c; }
.card strong { font: 400 23px/24px Roboto, sans-serif; color: #252423; }
.pierow { display: flex; }
.legend { padding-top: 36px; font-size: 5px; line-height: 11px; color: #605e5c; white-space: nowrap; }
.legend b { display: block; line-height: 9px; font-weight: 400; }
.legend li { display: flex; align-items: center; gap: 1px; }
.legend li::before { content: ""; width: 4px; height: 4px; border-radius: 50%; background: currentColor; }
.c1::before { color: #118dff; }
.c2::before { color: #12239e; }
.c3::before { color: #e66c37; }
.c4::before { color: #6b007b; }
.c5::before { color: #e044a7; }

.filters { flex: none; width: 161px; border-left: 1px solid #bbb; font-size: 9px; }
.filters-head { padding: 0 10px 3px 6px; border-bottom: 1px solid #c8c6c4; }
.pane-title { height: 30px; display: flex; align-items: center; gap: 6px; }
.pane-title h2 { flex: 1; font-size: 12px; line-height: 16px; font-weight: 600; color: #252423; }
.filters .pane-title { padding-left: 3px; margin-right: -2px; }
.filters .pane-title button:last-child { margin-left: 6px; }
.fsearch { height: 27px; margin-top: 5px; display: flex; align-items: center; gap: 7px; padding-left: 8px; border: 1px solid #c8c6c4; border-radius: 2px; font-size: 10px; }
input::placeholder { color: #484644; opacity: 1; }
.fsec { display: flex; justify-content: space-between; margin: 12px 9px 6px 6px; line-height: 14px; }
.drop { margin: 0 6px 21px; height: 37px; display: grid; place-items: center; border: 1px solid #dddbd9; border-radius: 2px; }
.pagebar { flex: none; height: 29px; display: flex; border-top: 1px solid #e5e3e1; border-left: 1px solid #e5e3e1; }
.view { width: 20px; height: 24px; margin-left: 6px; margin-right: 9px; display: grid; place-items: center; border-bottom: 2px solid transparent; }
.view.on { border-color: #117865; }
.view.arrow { width: 16px; margin: 2px 0 0; }
.page { width: 60px; background: #fff; border-left: 1px solid #aaa; border-bottom: 3px solid #117865; font-weight: 700; }
.add { width: 32px; display: grid; place-items: center; background: #117865; }

.viz { flex: none; width: 145px; border-left: 1px solid #d8d6d4; border-right: 1px solid #e1dfdd; }
.viz .pane-title { padding: 0 6px; }
.viz h4 { padding-left: 6px; font-size: 9px; font-weight: 600; line-height: 12px; }
.modes { display: flex; gap: 27px; padding: 3px 6px 0; }
.mode { width: 26px; height: 26px; display: grid; place-items: center; }
.mode.on { background: #d2d0ce; border-radius: 2px; }
.notch { width: 100%; margin-top: 3px; }
.gallery { display: grid; grid-template-columns: repeat(6, 16px); justify-content: space-between; align-content: space-between; height: 151px; margin: 8px 8px 6px 7px; }
.gallery svg { width: 16px; height: 16px; }
.k { fill: none; stroke: #555; }
.gf { fill: #ccc; }
.b { fill: #7fbbea; stroke: #2376b7; }
.l { fill: none; stroke: #2b88d8; }
.z { fill: #ffc84a; stroke: #e07b10; }
.t6 { font-size: 6px; fill: #2376b7; }
.t7 { font-size: 7px; fill: #2376b7; }
.t12 { font-size: 12px; font-weight: 700; fill: #2376b7; }
.wells { border-top: 1px solid #dddbd9; padding: 7px 4px 0 2px; }
.wells > span, .wells h5, .opt { padding-left: 6px; font-size: 9px; font-weight: 400; }
.well { height: 23px; margin: 3px 0 8px; padding-left: 7px; line-height: 21px; white-space: nowrap; background: #fff; border: 1px dashed #d2d0ce; }
.wells h5 { font-weight: 600; line-height: 14px; }
.opt { height: 21px; display: flex; align-items: center; justify-content: space-between; padding-right: 14px; margin-top: 1px; }
.toggle { width: 26px; height: 13px; display: flex; align-items: center; justify-content: center; gap: 2px; border: 1px solid #aaa; border-radius: 7px; background: #fff; font-size: 7px; line-height: 11px; }
.toggle input { appearance: none; width: 7px; height: 7px; margin: 0; border-radius: 50%; background: #555; }
.toggle.checked { background: #117865; border-color: #117865; color: #fff; }
.toggle.checked input { background: #fff; }
.well.last { height: 21px; line-height: 19px; padding-left: 6px; margin-top: 4px; }

.datapane { flex: none; width: 144px; padding: 0 4px; }
.datapane .pane-title { padding: 0 2px; }
.dsearch { height: 20px; margin-top: 5px; display: flex; align-items: center; gap: 5px; padding-left: 9px; background: #fff; border: 1px solid #dddbd9; border-bottom-color: #888; border-radius: 3px; font-size: 10px; }
.sheet { height: 19px; margin-top: 7px; display: flex; align-items: center; gap: 3px; padding-left: 6px; }
.sheet svg + svg { margin-right: 1px; }
.fields li { height: 19px; display: flex; align-items: center; white-space: nowrap; }
.fields i { flex: none; width: 21px; padding-left: 1px; display: grid; place-items: center; font-style: normal; font-size: 13px; }
.fields > li > i { width: 31px; padding-left: 14px; }
.fields label { display: flex; align-items: center; font-size: 9px; }
.fields input { appearance: none; width: 10px; height: 10px; margin: 0; border: 1px solid #aaa; border-radius: 2px; }

.status { flex: none; height: 18px; display: flex; align-items: center; justify-content: space-between; padding: 0 15px 0 3px; border-top: 1px solid #e1dfdd; color: #555; }
.zoom { display: flex; align-items: center; gap: 5px; }
.zoom span { margin: 0 10px 0 5px; }
.zoom input { appearance: none; width: 81px; height: 10px; margin: 0; background: linear-gradient(#666, #666) 49% 50% / 2px 5px no-repeat, linear-gradient(#888, #888) 0 50% / 100% 1px no-repeat; }
.zoom input::-webkit-slider-thumb { appearance: none; width: 3px; height: 9px; background: #444; }

.taskbar { flex: none; height: 32px; display: flex; background: #1f1f1f; color: #eee; }
.taskbar button { display: flex; align-items: center; justify-content: center; white-space: nowrap; }
.start { width: 39px; }
.tsearch { flex: 1; display: flex; align-items: center; gap: 8px; padding-left: 9px; background: #4a4a4a; font-size: 12px; }
.tsearch input::placeholder { color: #ddd; }
.pins { display: flex; padding-left: 2px; }
.pins button { width: 34px; }
.pins button:first-child { width: 38px; }
.badge { font-size: 8px; font-weight: 700; fill: #fff; }
.apps { display: flex; gap: 6px; margin-left: 4px; }
.apps button { width: 55px; gap: 3px; border-bottom: 2px solid #76b9ed; font-size: 9px; }
.apps .active { width: 60px; padding-right: 30px; margin-left: -3px; background: #4a4a4a; }
.tray { display: flex; align-items: center; margin-left: 3px; }
.tray button { width: 26px; }
.tray .clock { width: 54px; line-height: 14px; }
.tray button:last-child { width: 44px; }
```
